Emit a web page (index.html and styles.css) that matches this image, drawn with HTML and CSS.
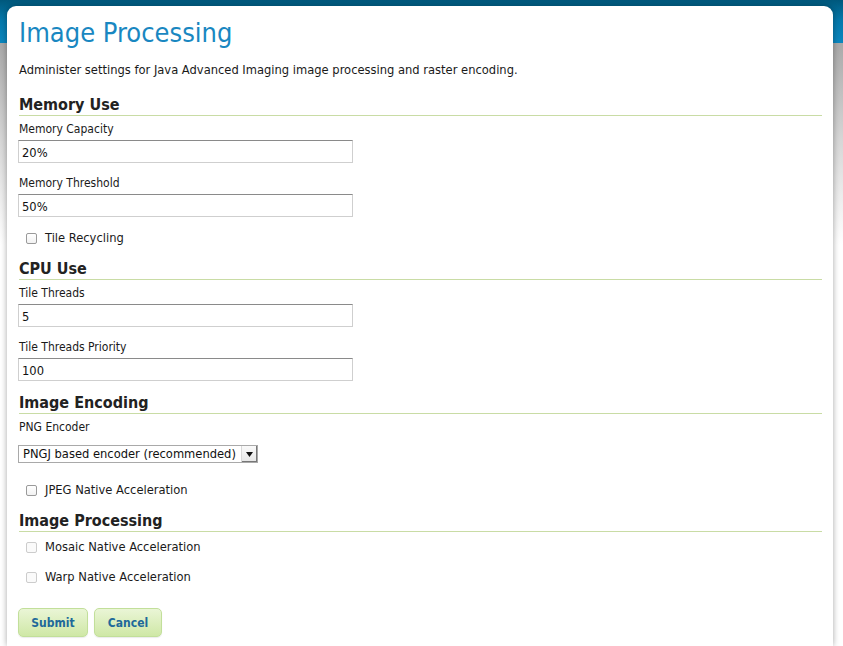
FILE: index.html
```html
<!DOCTYPE html>
<html>
<head>
<meta charset="utf-8">
<title>Image Processing</title>
<link rel="stylesheet" href="styles.css">
</head>
<body>
<div class="page">
  <h1 class="title">Image Processing</h1>
  <p class="desc">Administer settings for Java Advanced Imaging image processing and raster encoding.</p>
  <form class="form">
    <h2 class="section first-section">Memory Use</h2>
    <div class="field">
      <label class="lbl">Memory Capacity</label>
      <input class="txt" type="text" value="20%">
    </div>
    <div class="field">
      <label class="lbl">Memory Threshold</label>
      <input class="txt" type="text" value="50%">
    </div>
    <label class="check gap-top"><input type="checkbox" class="cb"><span>Tile Recycling</span></label>

    <h2 class="section">CPU Use</h2>
    <div class="field">
      <label class="lbl">Tile Threads</label>
      <input class="txt" type="text" value="5">
    </div>
    <div class="field">
      <label class="lbl">Tile Threads Priority</label>
      <input class="txt" type="text" value="100">
    </div>

    <h2 class="section after-field">Image Encoding</h2>
    <div class="field">
      <label class="lbl">PNG Encoder</label>
      <span class="selwrap">
        <select class="sel">
          <option>PNGJ based encoder (recommended)</option>
          <option>Java standard encoder</option>
        </select>
        <span class="selarrow"><svg width="7" height="5" viewBox="0 0 7 5"><path d="M0 0H7L3.5 5Z" fill="#111"/></svg></span>
      </span>
    </div>
    <label class="check jpeg"><input type="checkbox" class="cb"><span>JPEG Native Acceleration</span></label>

    <h2 class="section">Image Processing</h2>
    <label class="check first disabled"><input type="checkbox" class="cb" disabled><span>Mosaic Native Acceleration</span></label>
    <label class="check disabled next"><input type="checkbox" class="cb" disabled><span>Warp Native Acceleration</span></label>

    <div class="buttons">
      <button type="button" class="btn submit">Submit</button>
      <button type="button" class="btn cancel">Cancel</button>
    </div>
  </form>
</div>
</body>
</html>
```
FILE: styles.css
```css
html, body {
  margin: 0;
  padding: 0;
}
body {
  box-sizing: border-box;
  height: 646px;
  overflow: hidden;
  background:
    linear-gradient(to bottom, #00587c 0px, #0478ab 20px, #0b87bf 43px, transparent 43px),
    linear-gradient(to bottom, #a9a9a9 43px, #d6d6d6 140px, #ffffff 245px);
  font-family: "DejaVu Sans Condensed", "DejaVu Sans", sans-serif;
  color: #1a1a1a;
  padding-top: 6px;
}
.page {
  box-sizing: border-box;
  height: 640px;
  margin: 0 10px 0 7px;
  background: #fff;
  border-radius: 9px 9px 0 0;
  padding: 0 11px 0 12px;
  box-shadow: 0 0 6px rgba(0, 0, 0, 0.35);
}
.title {
  margin: 0;
  padding-top: 10px;
  font-size: 27px;
  line-height: 34px;
  font-weight: normal;
  color: #1987c1;
}
.desc {
  margin: 12px 0 0;
  font-size: 12.8px;
  line-height: 16px;
}
.form {
  margin: 0;
}
.section {
  margin: 13px 0 0;
  font-size: 16px;
  line-height: 20px;
  font-weight: bold;
  color: #222;
  border-bottom: 1px solid #c9dca5;
}
.section.first-section {
  margin-top: 17px;
}
.section.after-field {
  margin-top: 12px;
}
.section + .field {
  margin-top: 5px;
}
.field {
  margin-top: 12px;
}
.lbl {
  display: block;
  font-size: 12px;
  line-height: 16px;
  margin-bottom: 3px;
}
.txt {
  display: block;
  box-sizing: border-box;
  width: 335px;
  height: 23px;
  margin: 0 0 0 -1px;
  padding: 2px 3px 0;
  border: 1px solid #cfcfcf;
  border-top-color: #8a8a8a;
  font-family: inherit;
  font-size: 12.8px;
  color: #111;
  outline: none;
}
.check {
  display: flex;
  align-items: center;
  font-size: 12.8px;
  line-height: 16px;
  padding-left: 7px;
  gap: 8px;
}
.check.gap-top {
  margin-top: 13px;
}
.cb {
  appearance: none;
  -webkit-appearance: none;
  margin: 0;
  width: 11px;
  height: 11px;
  border: 1px solid #9a9a9a;
  border-radius: 2px;
  background: linear-gradient(#fff, #f2f2f2);
  box-sizing: border-box;
}
.check.disabled .cb {
  border-color: #cccccc;
  background: #fafafa;
}
.check.jpeg {
  margin-top: 19px;
}
.check.first {
  margin-top: 7px;
}
.check.next {
  margin-top: 14px;
}
.selwrap {
  position: relative;
  display: inline-block;
  margin: 7px 0 0 -1px;
}
.sel {
  appearance: none;
  -webkit-appearance: none;
  display: block;
  box-sizing: border-box;
  width: 240px;
  height: 18px;
  margin: 0;
  padding: 0 18px 0 4px;
  border: 1px solid #a9a9a9;
  border-radius: 0;
  background: #fff;
  font-family: inherit;
  font-size: 12.8px;
  line-height: 16px;
  color: #111;
  outline: none;
}
.selarrow {
  position: absolute;
  right: 1px;
  top: 1px;
  width: 15px;
  height: 16px;
  display: flex;
  align-items: center;
  justify-content: center;
  background: linear-gradient(#fafafa, #e6e6e6);
  border-left: 1px solid #d8d8d8;
  box-shadow: inset -1px -1px 0 #777;
  pointer-events: none;
}
.buttons {
  display: flex;
  gap: 6px;
  margin: 23px 0 0 -1px;
}
.btn {
  box-sizing: border-box;
  height: 29px;
  padding: 0;
  border: 1px solid #c2df9a;
  border-radius: 5px;
  background: linear-gradient(#eaf5d6, #cfe8a6);
  font-family: inherit;
  font-size: 12px;
  font-weight: bold;
  color: #20699a;
  box-shadow: 0 1px 1px rgba(0,0,0,0.08);
}
.submit {
  width: 70px;
}
.cancel {
  width: 68px;
}
```
